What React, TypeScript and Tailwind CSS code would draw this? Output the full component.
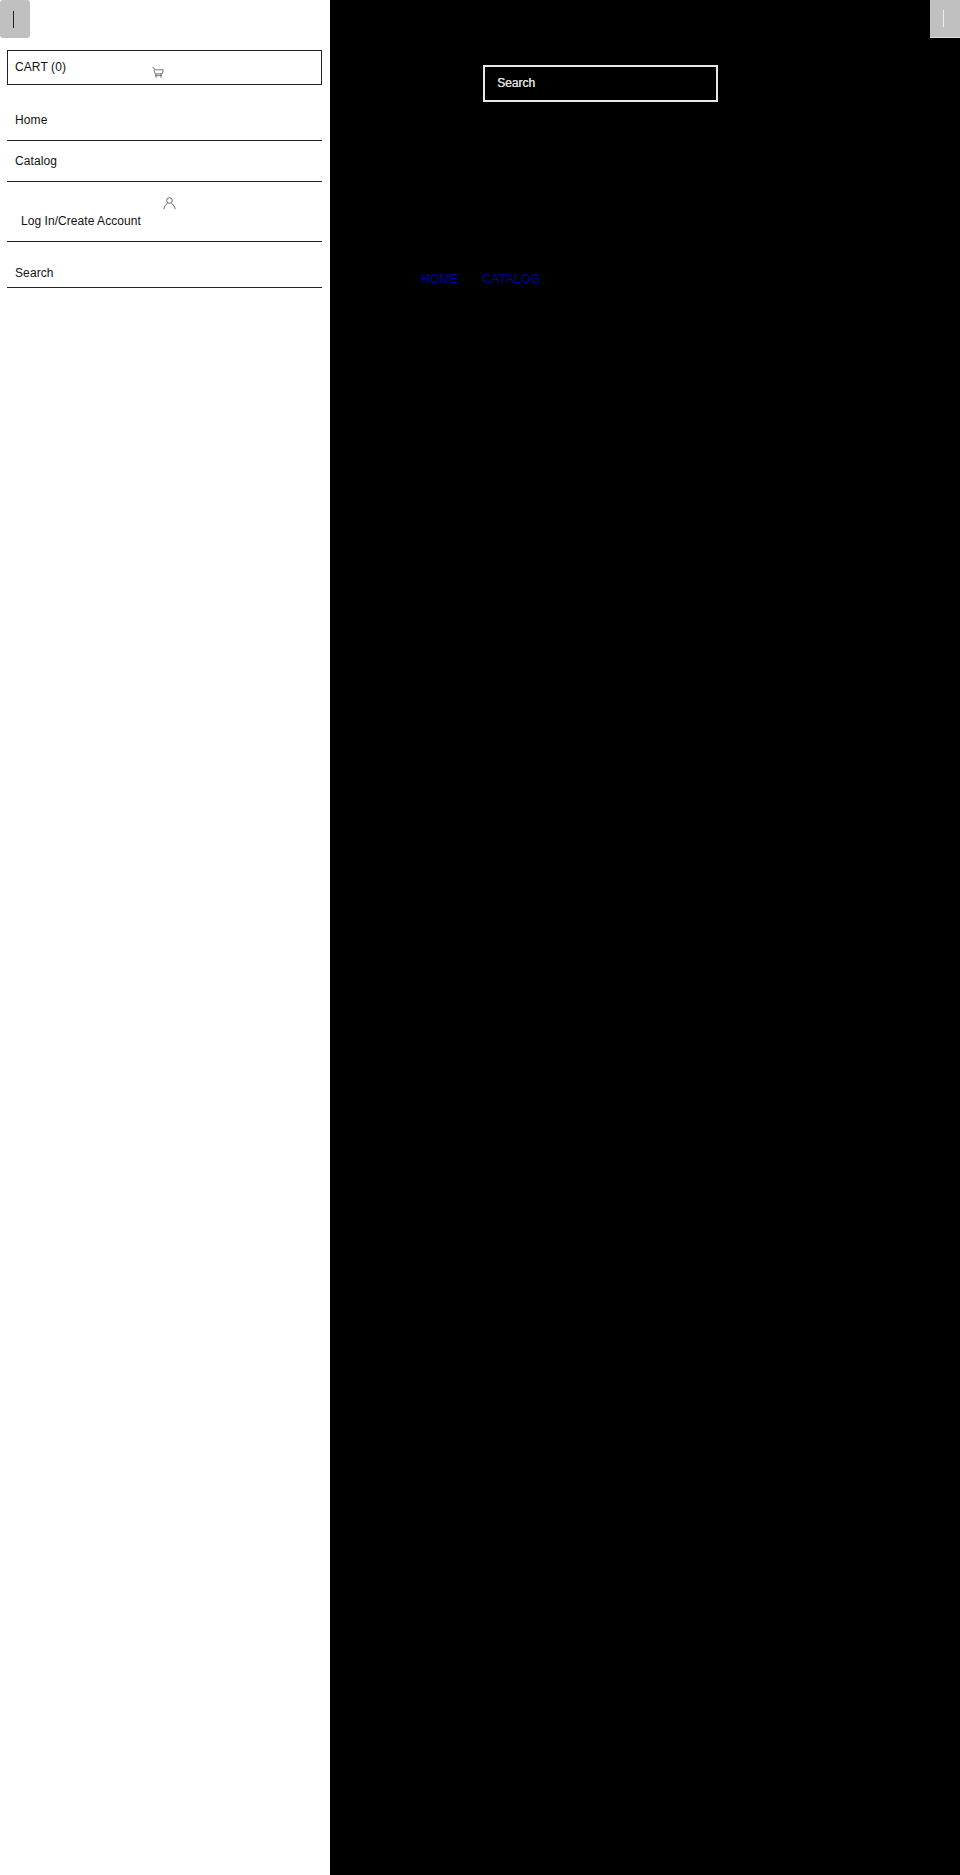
import React from "react";

function CartIcon() {
  return (
    <svg width="12" height="12" viewBox="0 0 12 12" fill="none" stroke="#555" strokeWidth="0.8">
      <path d="M0.5 0.8h1.2l1.2 2h8.4l-1 4H3.2L2 3" />
      <path d="M3 8.6h7M4 6.8v4M9 6.8v4" />
    </svg>
  );
}

function UserIcon() {
  return (
    <svg width="13" height="13" viewBox="0 0 13 13" fill="none" stroke="#555" strokeWidth="0.9">
      <circle cx="6.5" cy="3.5" r="2.8" />
      <path d="M0.8 12.2C1.4 9 3.2 7 4.6 6.2M12.2 12.2C11.6 9 9.8 7 8.4 6.2" />
    </svg>
  );
}

function NavRow({ label, className }: { label: string; className: string }) {
  return (
    <a className={`block border-b border-[#222] text-[#111] ${className}`}>{label}</a>
  );
}

export default function App() {
  return (
    <div className="flex h-[1875px] w-[960px] overflow-hidden bg-black font-['Liberation_Sans',Arial,sans-serif]">
      <aside className="relative h-full w-[330px] shrink-0 bg-white text-[12px] tracking-[0.1px]">
        <button className="flex h-[38px] w-[30px] items-center justify-center rounded-[3px] bg-[#c0c0c0] pr-[4px]">
          <span className="h-[17px] w-px bg-[#222]" />
        </button>
        <div className="ml-[7px] mt-[12px] w-[315px]">
          <div className="relative h-[35px] border border-[#222] pl-[7px] pt-[8px] leading-[16px] text-[#111]">
            CART (0)
            <span className="absolute left-[144px] top-[16px]">
              <CartIcon />
            </span>
          </div>
          <NavRow label="Home" className="mt-[15px] h-[41px] pl-[8px] pt-[12px] leading-[16px]" />
          <NavRow label="Catalog" className="h-[41px] pl-[8px] pt-[12px] leading-[16px]" />
          <div className="relative">
            <span className="absolute left-[156px] top-[15px]">
              <UserIcon />
            </span>
            <NavRow label="Log In/Create Account" className="h-[60px] pl-[14px] pt-[31px] leading-[16px] tracking-[0.05px]" />
          </div>
          <NavRow label="Search" className="mt-[15px] h-[31px] pl-[8px] pt-[8px] leading-[16px]" />
        </div>
      </aside>
      <main className="relative h-full flex-1 bg-black">
        <div className="flex justify-end">
          <button className="flex h-[38px] w-[30px] items-center justify-center border-b border-[#ddd] bg-[#c0c0c0] pr-[4px]">
            <span className="h-[17px] w-px bg-[#eee]" />
          </button>
        </div>
        <div className="ml-[153px] mt-[27px] flex h-[37px] w-[235px] items-center border-2 border-[#e8e8e8] pb-[2px] pl-[12px] text-[12px] text-[#ddd] [text-shadow:0.4px_0_0_#ddd]">
          Search
        </div>
        <nav className="ml-[91px] mt-[169px] flex gap-[24px] text-[12px] leading-[16px] tracking-[0.35px] text-[#0000a8]">
          <a>HOME</a>
          <a>CATALOG</a>
        </nav>
      </main>
    </div>
  );
}
